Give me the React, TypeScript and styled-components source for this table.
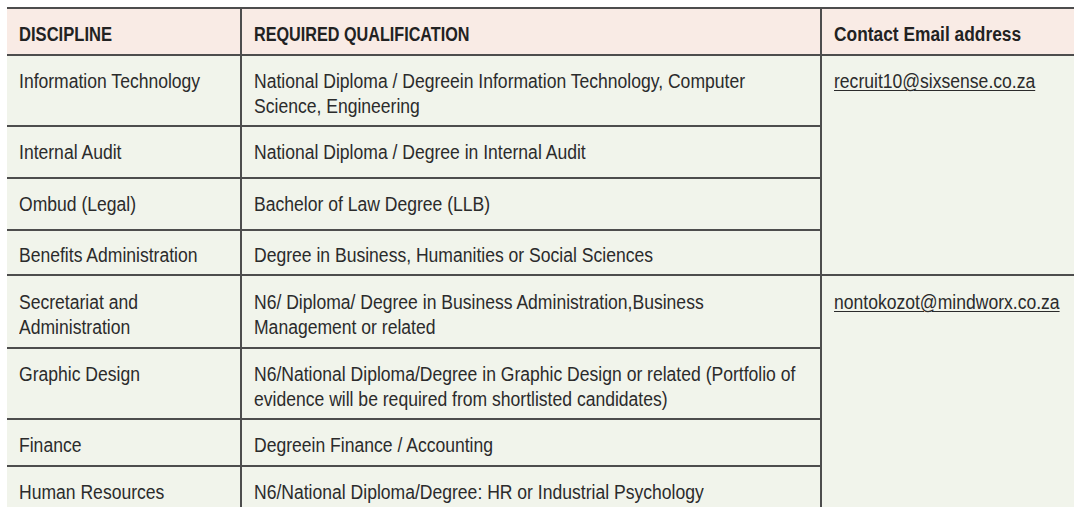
import React from "react";
import styled, { createGlobalStyle } from "styled-components";

const Global = createGlobalStyle`
  html, body { margin: 0; padding: 0; background: #ffffff; }
  body { font-family: "Liberation Sans", Arial, sans-serif; }
`;

const Page = styled.div`
  padding: 7px 6px 0 7px;
  width: 1080px;
  height: 513px;
  box-sizing: border-box;
  overflow: hidden;
`;

const Table = styled.table`
  width: 1067px;
  border-collapse: collapse;
  table-layout: fixed;
  color: #2b2b2b;
  font-size: 19.5px;
  line-height: 24.5px;
`;

const Row = styled.tr<{ $h: number }>`
  height: ${(p) => p.$h}px;
`;

const Head = styled.th`
  background: #f9ebe5;
  color: #222222;
  text-align: left;
  vertical-align: top;
  font-weight: bold;
  padding: 13px 12px 0 12px;
  border-top: 2px solid #4d4d4d;
  border-bottom: 2px solid #4d4d4d;
  border-left: 2px solid #4d4d4d;
  overflow: hidden;
  &:first-child { border-left: none; }
`;

const Cell = styled.td<{ $last?: boolean; $top?: number }>`
  background: #f1f4eb;
  vertical-align: top;
  padding: ${(p) => p.$top ?? 13}px 22px 0 12px;
  border-bottom: ${(p) => (p.$last ? "none" : "2px solid #4d4d4d")};
  border-left: 2px solid #4d4d4d;
  overflow: hidden;
  &:first-child { border-left: none; }
`;

const Squeeze = styled.div<{ $k: number }>`
  width: calc(100% / ${(p) => p.$k});
  transform: scaleX(${(p) => p.$k});
  transform-origin: 0 0;
`;

const Mail = styled.a`
  color: #2b2b2b;
  white-space: nowrap;
  text-decoration: underline;
  text-underline-offset: 2px;
`;

type R = { d: string; q: string; h: number; top?: number; mail?: string; last?: boolean };

const rows: R[] = [
  { d: "Information Technology", q: "National Diploma / Degreein Information Technology, Computer Science, Engineering", h: 71, mail: "recruit10@sixsense.co.za" },
  { d: "Internal Audit", q: "National Diploma / Degree in Internal Audit", h: 52 },
  { d: "Ombud (Legal)", q: "Bachelor of Law Degree (LLB)", h: 52 },
  { d: "Benefits Administration", q: "Degree in Business, Humanities or Social Sciences", h: 45, top: 12 },
  { d: "Secretariat and Administration", q: "N6/ Diploma/ Degree in Business Administration,Business Management or related", h: 73, top: 14, mail: "nontokozot@mindworx.co.za", last: true },
  { d: "Graphic Design", q: "N6/National Diploma/Degree in Graphic Design or related (Portfolio of evidence will be required from shortlisted candidates)", h: 71 },
  { d: "Finance", q: "Degreein Finance / Accounting", h: 47 },
  { d: "Human Resources", q: "N6/National Diploma/Degree: HR or Industrial Psychology", h: 41, last: true },
];

const K = 0.9;

export default function App() {
  return (
    <Page>
      <Global />
      <Table>
        <colgroup>
          <col style={{ width: 234 }} />
          <col style={{ width: 580 }} />
          <col style={{ width: 253 }} />
        </colgroup>
        <thead>
          <Row $h={47}>
            <Head><Squeeze $k={0.85}>DISCIPLINE</Squeeze></Head>
            <Head><Squeeze $k={0.83}>REQUIRED QUALIFICATION</Squeeze></Head>
            <Head><Squeeze $k={0.89}>Contact Email address</Squeeze></Head>
          </Row>
        </thead>
        <tbody>
          {rows.map((r, i) => (
            <Row $h={r.h} key={r.d}>
              <Cell $top={r.top} $last={i === rows.length - 1}><Squeeze $k={K}>{r.d}</Squeeze></Cell>
              <Cell $top={r.top} $last={i === rows.length - 1}><Squeeze $k={K}>{r.q}</Squeeze></Cell>
              {r.mail && (
                <Cell rowSpan={4} $top={r.top} $last={r.last}>
                  <Squeeze $k={K}><Mail href="#">{r.mail}</Mail></Squeeze>
                </Cell>
              )}
            </Row>
          ))}
        </tbody>
      </Table>
    </Page>
  );
}
